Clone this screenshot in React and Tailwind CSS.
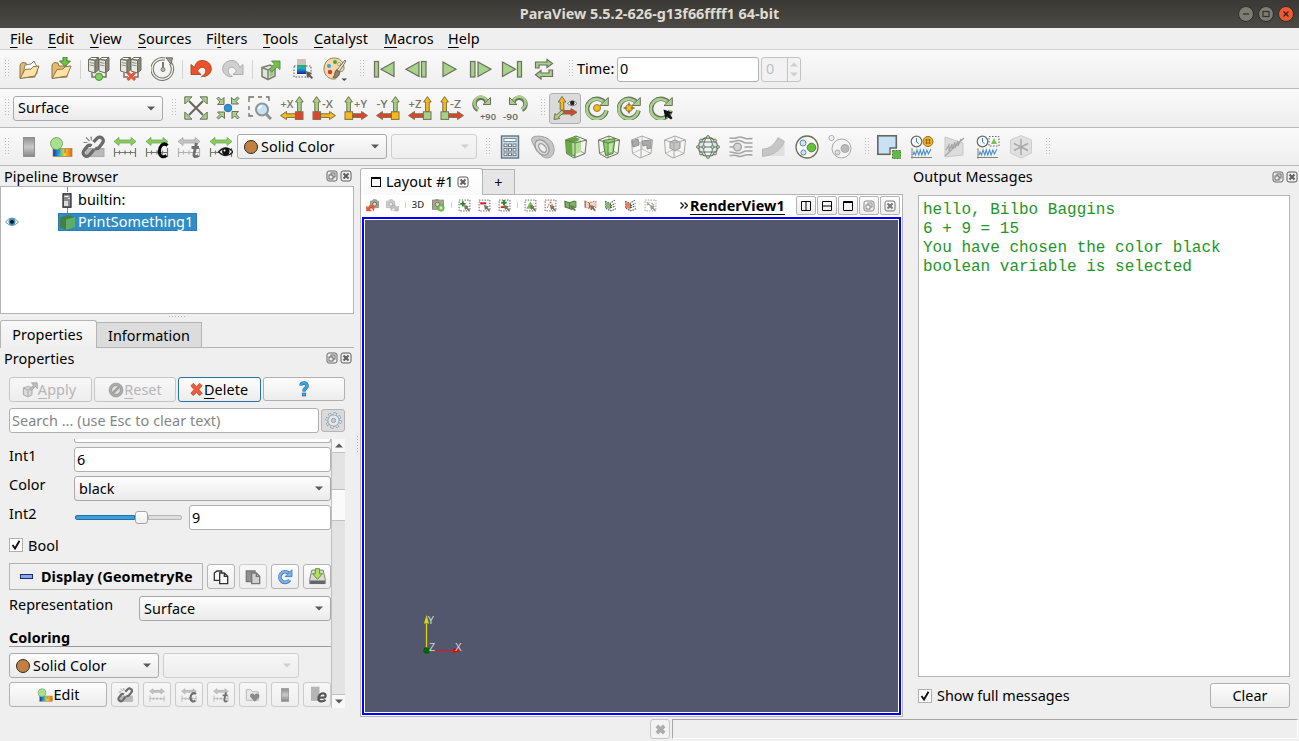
import React from "react";

const G = "#a5d28c";
const S = "#6f6f5c";
const Y = "#fdb813";
const R = "#e2412b";

/* ---------- helpers ---------- */
function Svg({ s = 24, children, className = "" }) {
  return (
    <svg width={s} height={s} viewBox="0 0 24 24" fill="none" className={"shrink-0 " + className}>
      {children}
    </svg>
  );
}
function Slot({ children, wide }) {
  return <div className={(wide ? "w-[33px]" : "w-8") + " flex shrink-0 items-center justify-center"}>{children}</div>;
}
function Dots() {
  return (
    <svg width="5" height="18" viewBox="0 0 5 18" className="shrink-0">
      {[0, 3, 6, 9, 12, 15].map((y) => (
        <g key={y} fill="#bcbcbc">
          <rect x="0" y={y} width="1" height="1" />
          <rect x="3" y={y} width="1" height="1" />
        </g>
      ))}
    </svg>
  );
}
function Grip({ first, filter }) {
  return (
    <div className={"flex shrink-0 items-center " + (first ? "w-[13px] pl-[5px]" : filter ? "w-[16px] pl-[9px]" : "w-[17px] pl-[9px]")}>
      <Dots />
    </div>
  );
}
function Sep() {
  return (
    <div className="flex w-[6px] shrink-0 justify-center">
      <div className="h-[19px] w-px bg-[#d2d2d2]" />
    </div>
  );
}
function Caret({ dim, up }) {
  return (
    <svg width="8" height="5" viewBox="0 0 8 5" className="shrink-0">
      <path d={up ? "M0 4.5L4 .5L8 4.5z" : "M0 .5L4 4.5L8 .5z"} fill={dim ? "#cfcfcf" : "#5a5a5a"} />
    </svg>
  );
}
const BTN = "border border-[#b0b0b0] rounded-[3px] bg-linear-to-b from-[#fdfdfd] to-[#ececec] ";
function Combo({ className, dim, children }) {
  return (
    <div
      className={
        "flex h-[25px] shrink-0 items-center justify-between rounded-[3px] border bg-linear-to-b pr-[7px] pl-[5px] " +
        (dim ? "border-[#cecece] from-[#f6f6f6] to-[#eeeeee] " : "border-[#a9a9a9] from-[#fdfdfd] to-[#ebebeb] ") +
        className
      }
    >
      <div className="flex items-center">{children}</div>
      <Caret dim={dim} />
    </div>
  );
}
function Ball() {
  return <div className="mr-[3px] ml-[1px] h-[14px] w-[14px] rounded-full border border-[#2b2b2b] bg-[#c47f43]" />;
}
function DockButtons() {
  return (
    <div className="flex gap-[2px]">
      <svg width="12" height="12" viewBox="0 0 12 12" fill="none" stroke="#666" strokeWidth="1">
        <rect x="1" y="1" width="10" height="10" rx="2" />
        <rect x="5" y="3" width="4" height="4" />
        <rect x="3" y="5" width="4" height="4" fill="#eee" />
      </svg>
      <CloseBox />
    </div>
  );
}
function CloseBox({ c = "#5c5c5c" }) {
  return (
    <svg width="12" height="12" viewBox="0 0 12 12" fill="none" stroke={c}>
      <rect x="1" y="1" width="10" height="10" rx="2" />
      <path d="M3.500 3.500l5 5M8.500 3.500l-5 5" strokeWidth="2" />
    </svg>
  );
}

/* ---------- icons: file toolbar ---------- */
function Folder({ save }) {
  return (
    <Svg>
      <path d="M3 21L3 8L5 5.500L9 6L10 9L18 9L18 20z" fill="#e5bb6a" stroke="#8b744a" />
      {!save && <path d="M6 17L8 8L14 7L17 4L20 10L20 17z" fill="#fff" stroke="#84847c" />}
      <path d="M3 21.500L8 12.500L14 12L16 9.800L22 9L18 19z" fill="#ffe2a5" stroke="#8b744a" />
      {save && <path d="M14 0h4v4h3.500L16 9.500L10.500 4H14z" fill="#6fc043" stroke="#4f7d3a" />}
    </Svg>
  );
}
function Server({ bad }) {
  return (
    <Svg>
      {[1.5, 12].map((x) => (
        <g key={x} stroke="#6c6c60">
          <path d={`M${x} 2.500l3-2h7l-3 2.500z`} fill="#fff" />
          <path d={`M${x} 2.500l6.500 1v12.500l-6.500-2z`} fill="#e9e9e4" />
          <path d={`M${x + 6.5} 3.500l3.500-3v12.500l-3.500 3z`} fill="#85857a" />
          <path d={`M${x + 1} 5.500l4.500 .8M${x + 1} 8l4.500 .8`} stroke="#8b8b80" strokeWidth="1" />
        </g>
      ))}
      <path d="M5 15.500v4.500h4M19 15.500v4.500h-4" stroke="#74746a" strokeWidth="1.500" />
      {bad ? (
        <path d="M8.500 15.500l7.500 7.500M16 15.500l-7.500 7.500" stroke="#e4563d" strokeWidth="3" />
      ) : (
        <circle cx="12" cy="19.800" r="3.700" fill="#7fd05a" stroke="#5d8a49" />
      )}
    </Svg>
  );
}
function Timer() {
  return (
    <Svg>
      <path d="M19.500 6A10.200 10.200 0 1 1 14 2.200" stroke="#6f6f66" strokeWidth="3.400" />
      <path d="M19.500 6A10.200 10.200 0 1 1 14 2.200" stroke="#f1f1ec" strokeWidth="1.400" />
      <path d="M15 .8h6.500l-1.500 6.500z" fill="#9b9b92" stroke="#6f6f66" />
      <path d="M12 5v7" stroke="#77776c" strokeWidth="2" />
      <circle cx="12" cy="12.500" r="2" fill="#bbb" stroke="#77776c" />
    </Svg>
  );
}
function Undo({ gray, flip }) {
  return (
    <Svg className={flip ? "-scale-x-100" : ""}>
      <path
        d="M2 7.500L2 17.500L12 17.500L8.500 14C10.500 9.500 15.500 9 16.500 12.500C17.300 15.500 15.500 18 12.500 19.500C18.500 20 22.300 16.500 22.300 11.500C22 6.500 18 3.500 13 3.500C9 3.500 6.500 6 5.500 10.500z"
        fill={gray ? "#cfcfcf" : "#ee5127"}
        stroke={gray ? "#a6a6a6" : "#a34429"}
        strokeWidth=".9"
      />
    </Svg>
  );
}
function Cube3() {
  return (
    <Svg>
      <path d="M3 10.500l8-2.500 5 2.500v8.500l-7 3.500-6-3z" fill="#dfe6d9" stroke="#7c8074" strokeWidth="1.600" />
      <path d="M3 10.500l6 2.500 7-2.500M9 13V22" stroke="#7c8074" strokeWidth="1.500" />
      <path d="M10.500 14l4-1.500v5.500l-4 2z" fill="#9fbf8c" />
      <path d="M12.500 4h8.500v8.500l-2.800-2.500-5.400 5-2.600-2.600L15.500 7z" fill="#76bf4d" stroke="#5f9142" />
    </Svg>
  );
}
function LegendIcon() {
  return (
    <Svg>
      <path d="M3 9h17v11H3z" stroke="#555" strokeDasharray="1.500 1.500" />
      <defs>
        <linearGradient id="lg" x1="0" y1="0" x2="0" y2="1">
          <stop offset="0" stopColor="#2ea84e" />
          <stop offset=".35" stopColor="#17b4d0" />
          <stop offset="1" stopColor="#1c1f9c" />
        </linearGradient>
      </defs>
      <rect x="6" y="2" width="9" height="7" fill="#cbc3bb" />
      <rect x="6" y="8" width="9" height="9" fill="url(#lg)" />
      <path d="M15 14l6 2-2 1.500 3 3.200-1.200 1.200-3.300-2.700-1.500 2z" fill="#5c5c50" />
    </Svg>
  );
}
function Palette() {
  return (
    <Svg>
      <path d="M11 1C5 1 1 6 1 12s5 11 11 10c3-1 0-4 2-6s7 0 7-5C21 5 17 1 11 1z" fill="#f6d9a8" stroke="#9a8052" />
      <circle cx="6" cy="9" r="2" fill="#3ba6df" />
      <circle cx="12" cy="5" r="2" fill="#4ba53f" />
      <circle cx="7" cy="15" r="2.200" fill="#d73a2c" />
      <circle cx="16" cy="7" r="1.500" fill="#fff" stroke="#b49a68" />
      <path d="M22 3l-8 10 2 2 7-11z" fill="#eee" stroke="#77715e" />
      <path d="M14 12.500c-3 2-1 5-4 8 4 1 7-2 6.500-5.500z" fill="#8a8676" stroke="#5e5a4c" />
      <path d="M18.500 21.500h5.500L21.200 24z" fill="#444" />
    </Svg>
  );
}
function VcrIcon({ kind }) {
  const p = { fill: G, stroke: S, strokeWidth: 1.2 };
  return (
    <Svg>
      {kind === "first" && (<g {...p}><rect x="2.500" y="4.500" width="4" height="15.500" /><path d="M22 5v14.500L9 12.200z" /></g>)}
      {kind === "prev" && (<g {...p}><rect x="17.500" y="4.500" width="4.500" height="15.500" /><path d="M15 5v14.500L2 12.200z" /></g>)}
      {kind === "play" && <path {...p} d="M7 5v14.500l13-7.300z" />}
      {kind === "next" && (<g {...p}><rect x="2.500" y="4.500" width="4.500" height="15.500" /><path d="M10 5v14.500l13-7.300z" /></g>)}
      {kind === "last" && (<g {...p}><rect x="17.500" y="4.500" width="4" height="15.500" /><path d="M2.500 5v14.500l13-7.300z" /></g>)}
      {kind === "loop" && (
        <g {...p}>
          <path d="M3.500 11V5H15V2.500L20.500 6.500L15 10.500V8H7V11z" />
          <path d="M20.500 13V19.500H9V22L3.500 17.800L9 13.500V16H17V13z" />
        </g>
      )}
    </Svg>
  );
}

/* ---------- icons: camera toolbar ---------- */
function ResetCam({ kind }) {
  return (
    <Svg>
      {kind === "out" && <path d="M5 5l14 14M19 5L5 19" stroke="#66665a" strokeWidth="2" />}
      {[0, 90, 180, 270].map((a) => (
        <path
          key={a}
          d={kind === "out" ? "M0.800 .8H8L.8 8z" : "M1 2.500L2.500 1L5.500 4L8 1.500V8.500H1.500L4 6z"}
          fill={G}
          stroke={S}
          strokeWidth="1"
          transform={`rotate(${a} 12 12)`}
        />
      ))}
      {kind === "in" && <circle cx="12" cy="12" r="3.800" fill="#2196d8" stroke="#42729a" />}
    </Svg>
  );
}
function ZoomBox() {
  return (
    <Svg>
      <path d="M1 6V1H6M10 1h4M18 1h3v4M1 10v4M1 17v3h4" stroke="#6f6f66" strokeWidth="1.300" />
      <circle cx="14" cy="13.500" r="6" fill="#c5e3f6" stroke="#8f9496" strokeWidth="2" />
      <path d="M18.500 18.500l4.500 4.500" stroke="#8f9090" strokeWidth="3" />
      <path d="M10.500 13a4 4 0 0 1 3.500-3" stroke="#fff" strokeWidth="1.500" />
    </Svg>
  );
}
function AxisIcon({ label, left, box, up, hor }) {
  const flip = left ? "translate(24,0) scale(-1,1)" : undefined;
  return (
    <Svg className="overflow-visible">
      <g transform={flip} stroke="#77704e" strokeWidth="1">
        <path d="M2.800 15.500V6H.8L4.600 .6L8.400 6H6.400V15.500z" fill={up} />
        <path d="M8.500 17.800H17.500V15.500L23.500 19.600L17.500 23.500V21.400H8.500z" fill={hor} />
        <rect x="1" y="15.800" width="7.600" height="7.600" fill={box} />
      </g>
      <text x={left ? 0.5 : 10} y="11.500" fontSize="10.500" fontFamily="Open Sans, sans-serif" fontWeight="600" fill="#77776c" textLength={label[0] === "-" ? 11 : 13} lengthAdjust="spacingAndGlyphs">
        {label}
      </text>
    </Svg>
  );
}
function Rot90({ ccw }) {
  return (
    <Svg className="overflow-visible">
      <g transform={ccw ? "translate(24,0) scale(-1,1)" : undefined}>
        <path d="M6 13.800A6.300 6.300 0 1 1 15 7" stroke={S} strokeWidth="4.400" />
        <path d="M6.500 13A6.300 6.300 0 1 1 15 7" stroke={G} strokeWidth="2.500" />
        <path d="M11 8.500H18.500V1.500z" fill={G} stroke={S} />
      </g>
      <text x={ccw ? -1 : 8} y="24" fontSize="9.500" fontFamily="Open Sans, sans-serif" fontWeight="600" fill="#66665c" textLength={ccw ? 15 : 16} lengthAdjust="spacingAndGlyphs">
        {ccw ? "-90" : "+90"}
      </text>
    </Svg>
  );
}
function AxesEye() {
  return (
    <Svg className="-ml-[3px] overflow-visible">
      <g stroke="#77704e">
        <path d="M8.200 14V6H6.200L10 .5L13.800 6H11.800V14z" fill={Y} />
        <path d="M10 14.500H19V12.500L25 16.300L19 20V18H10z" fill={R} />
        <path d="M10 14l2 2.500-5.500 4.500 1.300 1.500L2 23.500L3 17.500l1.500 1.500z" fill={G} />
      </g>
      <path d="M15.500 7.500q5-5.500 9.500 0q-4.500 4.500-9.500 0z" fill="#fff" stroke="#777" />
      <circle cx="20.300" cy="7" r="2.300" fill="#222" />
    </Svg>
  );
}
function CenterRot({ kind }) {
  return (
    <Svg>
      <path d="M20.800 8.500A9.800 9.800 0 1 0 21.500 14.500" stroke={S} strokeWidth="4.600" />
      <path d="M20.300 8.500A9.800 9.800 0 1 0 21.300 14.200" stroke={G} strokeWidth="2.700" />
      <path d="M15 9.500L23.300 9.500V1.500z" fill={G} stroke={S} />
      {kind !== "pick" && <circle cx="12" cy="12" r="3.500" fill={Y} stroke="#8e7d45" />}
      {kind === "cross" && <path d="M12 6.500v11M6.500 12h11" stroke={S} strokeWidth="1.300" />}
      {kind === "cross" && <circle cx="12" cy="12" r="2.400" fill={Y} />}
      {kind === "pick" && <path d="M14.500 13.500l9 3-3 1.500 3 4-1.500 1.500-4-3-1.500 3z" fill="#111" />}
    </Svg>
  );
}

/* ---------- icons: color toolbar ---------- */
function GrayBar({ s }) {
  return (
    <Svg s={s}>
      <defs>
        <linearGradient id="gb" x1="0" y1="0" x2="0" y2="1">
          <stop offset="0" stopColor="#8e8e8e" />
          <stop offset=".5" stopColor="#c9c9c9" />
          <stop offset="1" stopColor="#858585" />
        </linearGradient>
      </defs>
      <rect x="6.500" y="2.500" width="11" height="19" fill="url(#gb)" stroke="#909090" />
    </Svg>
  );
}
function ColorMap({ s }) {
  return (
    <Svg s={s}>
      <defs>
        <linearGradient id="rb">
          <stop offset="0" stopColor="#1a2a9c" />
          <stop offset=".3" stopColor="#17aeda" />
          <stop offset=".6" stopColor="#f3cf2c" />
          <stop offset="1" stopColor="#ee5a1e" />
        </linearGradient>
      </defs>
      <rect x="4" y="13.500" width="19" height="8" fill="url(#rb)" stroke="#a28e52" strokeWidth=".8" />
      <circle cx="7.500" cy="8.500" r="6" fill="#a8e08c" stroke="#7bab68" />
      <path d="M10 18v-4M16 18v-4" stroke="#666" strokeWidth=".8" />
    </Svg>
  );
}
function Rescale({ kind, gray, s }) {
  const a = gray ? "#c4c4c4" : "#84cf5a";
  return (
    <Svg s={s}>
      {kind !== "link" && (
        <>
          <path d="M1 6.500L6 2.500V5H18V2.500L23 6.500L18 10.500V8H6V10.500z" fill={a} stroke={gray ? "#a5a5a5" : "#75a55c"} strokeWidth=".8" />
          <path d="M1.500 13v9M22.500 13v9M1 17.500h22M6.500 15.500v4M12 15.500v4M17.500 15.500v4" stroke={gray ? "#b2b2b2" : "#77776a"} strokeWidth="1.200" />
        </>
      )}
      {kind === "link" && (
        <>
          <rect x="5" y="13.500" width="18" height="8" fill="#b9b9b9" stroke="#aaa" />
          <path d="M13 14.500l-4.500 5.500a3.300 3.300 0 0 1-5.500-4.500l3.500-4.500a3.200 3.200 0 0 1 4 0M12.500 7l3.500-3.500a3.300 3.300 0 0 1 5.500 4.500l-3.500 4.500a3.200 3.200 0 0 1-4 .5" stroke="#6a6a6a" strokeWidth="3.300" />
          <path d="M5 2.500l3.500 3.500M10 1.500l.5 4M2.500 7.500h4" stroke="#888" strokeWidth="1.200" />
        </>
      )}
      {kind === "c" && <path d="M22.500 10.500C18 6.500 13.500 12 14.500 18c.5 3.500 3.500 5 7 2.500" stroke={gray ? "#6d6d6d" : "#0a0a0a"} strokeWidth="3.200" />}
      {kind === "t" && <path d="M19.500 8L17 19c-.5 3 1.500 3.500 4.500 1.500M14.500 12.500h7.500" stroke="#707070" strokeWidth="2.800" />}
      {kind === "eye" && (
        <>
          <path d="M9.500 17q7.500-8 14.500 0q-7 7-14.500 0z" fill="#f0f0f0" stroke="#222" strokeWidth="1.300" />
          <circle cx="16.800" cy="16.500" r="3.700" fill="#111" />
          <circle cx="15.500" cy="15.500" r="1" fill="#fff" />
        </>
      )}
    </Svg>
  );
}

/* ---------- icons: filters toolbar ---------- */
function Calc() {
  return (
    <Svg>
      <rect x="3.500" y="1" width="17" height="22" fill="#c3def2" stroke="#64757f" strokeWidth="1.400" />
      <rect x="6" y="3.500" width="12" height="3" fill="#fff" stroke="#7c8c95" />
      {[9, 13.5, 18].map((y) => [6, 10.5, 15].map((x) => <rect key={x + "-" + y} x={x} y={y} width="3" height="2.600" fill="#fff" stroke="#6a7176" strokeWidth=".9" />))}
    </Svg>
  );
}
function Contour() {
  return (
    <Svg>
      <path d="M1 3C3 0 16 0 21 7.500c3.500 6 2.500 12-1.500 14.500c-4 2-8 .5-11-3.500S-1 6.500 1 3z" fill="#c6c6c6" stroke="#a0a0a0" />
      <ellipse cx="11" cy="12.500" rx="6" ry="8.500" transform="rotate(-38 11 12.500)" fill="#dcdcdc" stroke="#9a9a9a" strokeWidth="1.300" />
      <ellipse cx="11.500" cy="13" rx="3" ry="5" transform="rotate(-38 11.500 13)" fill="#eee" stroke="#9a9a9a" strokeWidth="1.300" />
    </Svg>
  );
}
function CubeIcon({ kind }) {
  const gray = kind === "thresh" || kind === "subset";
  const c = gray ? "#a9a9a9" : "#68755c";
  return (
    <Svg>
      <path d="M1.500 5L12 1l10.500 4-1.500 13.500L10 23L2.500 18.500z" fill="#f5f5f3" stroke={c} />
      <path d="M3 18l9-4 9 4.500M12 1v13" stroke={c} strokeWidth=".7" />
      {kind === "clip" && <><path d="M1.500 5L11 2l5 2-5 4v14L3 18.500z" fill="#5fa53a" /><path d="M8 8l9-3v12L8.500 20z" fill="#b3df96" /><path d="M2 5.500L8 8v13L3 18.500z" fill="#68a945" /></>}
      {kind === "slice" && <><path d="M6 5.500L18 3.500 16 18.500 8.500 20.500z" fill="#8dce6b" stroke="#4d803a" /><path d="M10 9l6-1-1 9h-4z" fill="#b9e49d" /></>}
      {kind === "thresh" && <><path d="M2 6l6-2 1 6-6 2zM12 6l9-1v8l-4 1v-4l-4 1z" fill="#aaa" stroke="#8f8f8f" /></>}
      {kind === "subset" && <><path d="M7 7l5-2 5 2v6l-5 3-5-3z" fill="#c4c4c4" stroke="#999" /></>}
      <path d="M1.500 5L11 8l11.500-3M11 8v14.500" stroke={c} />
    </Svg>
  );
}
function Glyph() {
  return (
    <Svg>
      <circle cx="12" cy="12" r="9.500" fill="#cfe7f6" stroke={S} strokeWidth="1.300" />
      <ellipse cx="12" cy="12" rx="4.500" ry="9.500" fill="#e7f4fb" stroke={S} />
      <path d="M2.500 12h19M4.500 7h15M4.500 17h15" stroke={S} />
      {[[12, 2], [12, 22], [2, 12], [22, 12], [7.5, 12], [16.5, 12], [5, 5.5], [19, 5.5], [5, 18.5], [19, 18.5]].map(([x, y]) => (
        <circle key={x + "." + y} cx={x} cy={y} r="1.500" fill="#b4d99b" stroke={S} strokeWidth=".8" />
      ))}
    </Svg>
  );
}
function Stream() {
  return (
    <Svg>
      <path d="M.5 3c5 0 5 1 8-.5s6 .5 8 1 5 0 7 0M.5 7c4 0 6-1.500 9-1.500s5 2.500 8 2.500h6M.5 20.500c5 0 5-1 8 .5s6-.5 8-1 5 0 7 0M.5 17c4 0 6 1.500 9 1.500s5-2.500 8-2.500h6M.5 12h4M15.500 12h8" stroke="#a5a5a5" strokeWidth="1.600" />
      <circle cx="8.500" cy="12" r="3.800" fill="#d5d5d5" stroke="#a0a0a0" strokeWidth="1.300" />
    </Svg>
  );
}
function Warp() {
  return (
    <Svg>
      <path d="M.5 14C8 14 13 9 16 3l6 3.500c1 2 .5 5 .5 6V21H.5z" fill="#e0e0e0" />
      <path d="M.5 14C8 14 13 9 16 2.500L22.500 6.500C20 13 13 20.500 .5 21.500z" fill="#c6c6c6" stroke="#aeaeae" strokeWidth=".7" />
    </Svg>
  );
}
function Group({ extract }) {
  return (
    <Svg>
      {extract ? (
        <g stroke="#a8a8a8">
          <circle cx="13.500" cy="13.500" r="9.500" fill="#f4f4f4" />
          <circle cx="3.500" cy="3" r="2.600" fill="#f4f4f4" />
          <circle cx="17" cy="13.500" r="4" fill="#bbb" />
          <circle cx="9.500" cy="17.500" r="2.500" fill="#ddd" />
        </g>
      ) : (
        <g stroke={S}>
          <circle cx="12" cy="12" r="11" fill="#f8f8f6" strokeWidth="1.300" />
          <circle cx="8" cy="8" r="3" fill="#cfe5f4" stroke="#5c88a4" />
          <circle cx="16.500" cy="12.500" r="4.300" fill="#67bf3e" stroke="#4f8637" />
          <circle cx="8.500" cy="17.500" r="2.500" fill="#cfe5f4" stroke="#5c88a4" />
        </g>
      )}
    </Svg>
  );
}
const WAVE = "M3 20l1-3 1.500 3L7 15l1.800 5 1.500-5 1.500 5 1.800-5 1.500 5 1.800-5 1.500 4L21 14";
function Plot({ kind }) {
  if (kind === "box")
    return (
      <Svg>
        <rect x=".8" y=".8" width="18.500" height="18.500" fill="#c8e1f4" stroke="#66665c" strokeWidth="1.600" />
        <rect x="13" y="13" width="11" height="11" fill="#f4f4f4" />
        <path d="M13 20V13H20" stroke="#66665c" strokeWidth="1.400" />
        <rect x="15.500" y="15.500" width="8" height="8" fill="#60bb45" stroke="#4c7c3b" strokeDasharray="2 1" />
      </Svg>
    );
  if (kind === "line")
    return (
      <Svg>
        <path d="M2 2l18 6v12L2 22z" fill="#dcdcdc" stroke="#c6c6c6" />
        <path d="M2 21L21 3M3 15l3-5v6l3-7v5l3-7v6l3-7v5l3-7" stroke="#a4a4a4" strokeWidth="1.200" />
      </Svg>
    );
  if (kind === "star")
    return (
      <Svg>
        <path d="M1.500 5L12 .5 22.500 5v13L12 23 1.500 18z" fill="#e0e0e0" stroke="#cccccc" />
        <path d="M12 4v16M5 8.500l14 7M19 8.500l-14 7" stroke="#a5a5a5" strokeWidth="1.400" />
      </Svg>
    );
  return (
    <Svg>
      <circle cx="6.500" cy="6.500" r="5.300" fill="#f6fafc" stroke="#6b6b60" strokeWidth="1.200" />
      <path d="M6.500 3v4l2 1.500" stroke="#3a7fb5" />
      {kind === "point" ? (
        <g><circle cx="18" cy="6.500" r="5" fill="#f3b21e" stroke="#85702f" /><path d="M15.500 5h5M15.500 8h5M16.500 4v5M19.500 4v5" stroke="#7a5b10" strokeWidth=".8" /></g>
      ) : (
        <g><rect x="13" y="1.500" width="10" height="9.500" stroke="#666" strokeDasharray="1.500 1.500" /><path d="M18 3l3 6h-6z" fill="#74c551" /></g>
      )}
      <path d={WAVE} stroke="#4c93cb" strokeWidth="1.100" />
      <path d="M2 13v10.500M1 22.500h21" stroke="#77776c" strokeWidth=".9" />
    </Svg>
  );
}

/* ---------- icons: view toolbar ---------- */
function CamIcon({ kind }) {
  const gray = kind === "redo";
  const x = kind === "undo" ? 8 : 1;
  return (
    <Svg s={13}>
      <path
        d={`M${x} 4h4l1-2.500h6l1 2.500h3v12H${x}z`}
        fill={gray ? "#cfcfcf" : "#a9a998"}
        stroke={gray ? "#b5b5b5" : "#85856f"}
        strokeWidth="1.500"
      />
      <circle cx={x + 8} cy="9.500" r="3.800" fill={gray ? "#e8e8e8" : "#d5d5cc"} stroke={gray ? "#aaa" : "#6a6a5a"} strokeWidth="1.800" />
      {kind === "undo" && <path d="M1 13v9h9l-3-3c2-4 6-3 6 3 4-4 2-10.500-3-10.500-4 0-5 2-6 4.500z" fill="#e6552c" stroke="#c05a3c" />}
      {gray && <path d="M23 13v9h-9l3-3c-2-4-6-3-6 3-4-4-2-10.500 3-10.500 4 0 5 2 6 4.500z" fill="#c0c0c0" stroke="#a8a8a8" />}
      {kind === "link" && <rect x="1" y="2" width="20" height="17" fill="#a3a78f" stroke="#85856f" strokeWidth="1.500" />}
      {kind === "link" && <circle cx="10" cy="10" r="4" fill="#d5d5cc" stroke="#6a6a5a" strokeWidth="1.500" />}
      {kind === "link" && <circle cx="16.500" cy="16.500" r="6" fill="#85cf5f" stroke="#5a9b42" strokeWidth="1.500" />}
      {kind === "link" && <circle cx="16.500" cy="16.500" r="2" fill="#e4f5da" />}
    </Svg>
  );
}
function SelIcon({ kind }) {
  const cube = kind.startsWith("cube");
  const poly = kind.startsWith("poly");
  const red = kind.endsWith("R");
  const dim = kind === "dim";
  return (
    <Svg s={13}>
      {!cube && !poly && <rect x="2" y="2" width="20" height="20" stroke={dim ? "#999" : "#555"} strokeWidth="1.800" strokeDasharray="2.500 2.500" />}
      {kind === "plus" && <path d="M9 4v10M4 9h10" stroke="#2b8a1f" strokeWidth="3.500" />}
      {kind === "minus" && <path d="M4 8h11" stroke="#dc1f1f" strokeWidth="4" />}
      {kind === "pm" && <path d="M5 15h12" stroke="#dc1f1f" strokeWidth="3.500" />}
      {kind === "pm" && <path d="M11 2v10M6 7h10" stroke="#2b8a1f" strokeWidth="3.500" />}
      {kind === "tri" && <path d="M12 4l8 14H4z" fill="#77bd58" />}
      {kind === "triR" && <path d="M12 5l7 13M12 5L5 18" stroke="#f06545" strokeWidth="2" strokeDasharray="3 2" />}
      {cube && <path d="M2 4l8 3 9-3 3 1v10l-8 4L3 15z" fill={red ? "#f3d5cd" : "#7ab860"} stroke={red ? "#ea6a4f" : "#5c8749"} strokeWidth="2" strokeDasharray={red ? "3 2" : undefined} />}
      {cube && <path d="M10 7v10M2 4v12" stroke="#66665a" strokeWidth="1.800" />}
      {poly && <path d="M2 4l9 4 9-6M3 4v13l10 5 9-4M12 9v10M12 13l9-5M12 16l9-3" stroke="#4f5f47" strokeWidth="2" strokeDasharray="3 1.500" />}
      {poly && <path d="M3 6l8 2v11l-8-3z" fill={red ? "#ef7b62" : "#86b870"} />}
      {dim && <path d="M5 6l6 6M5 12l5-6M14 7l5 5" stroke="#8db682" strokeWidth="2" />}
      {!poly && <path d="M11 11l9 2.500-2.500 2 4.500 5-2 2-5-4.500-2 3z" fill={dim ? "#999" : "#74745f"} />}
    </Svg>
  );
}

/* ---------- icons: property buttons ---------- */
function SmallIcon({ kind }) {
  const s = 16;
  if (kind === "copy" || kind === "paste") {
    const c = kind === "copy" ? "#333" : "#777";
    const f = kind === "copy" ? "#fafafa" : "#d0d0d0";
    return (
      <Svg s={s}>
        <path d={kind === "copy" ? "M2 6l4-3h7v14H2z" : "M2 3h13v16H2z"} fill={kind === "copy" ? f : "#909090"} stroke={c} strokeWidth="2" />
        <path d="M10 6h7l5 5v11H10z" fill={f} stroke={c} strokeWidth="2" />
        <path d="M17 6v5h5" stroke={c} strokeWidth="2" />
      </Svg>
    );
  }
  if (kind === "reload")
    return (
      <Svg s={s}>
        <path d="M19 16.500A8 8 0 1 1 17.500 6" stroke="#3f76b5" strokeWidth="5.500" />
        <path d="M18.500 16.500A8 8 0 1 1 17.500 6" stroke="#78b0e6" strokeWidth="3.500" />
        <path d="M22.500 1v10.500H12z" fill="#78b0e6" stroke="#3f76b5" strokeWidth="1.200" />
      </Svg>
    );
  if (kind === "save")
    return (
      <Svg s={17}>
        <path d="M4 3h16l3 13v6H1v-6z" fill="#d9d9d9" stroke="#777" strokeWidth="1.300" />
        <path d="M1.500 17.500h21v5h-21z" fill="#666" />
        <path d="M9 1h6v7h4l-7 8-7-8h4z" fill="#b4e05f" stroke="#5a8c26" strokeWidth="1.300" />
      </Svg>
    );
  if (kind === "fav")
    return (
      <Svg s={16}>
        <path d="M2 20V4h7l2 3h9v13z" fill="#e8e8e8" stroke="#b9b9b9" strokeWidth="1.500" />
        <path d="M14.500 22l-6.500-7c-2-5 4-7 6.500-3 2-4 8.500-2 7 3z" fill="#8b8b8b" />
      </Svg>
    );
  if (kind === "e")
    return (
      <Svg s={17} className="ml-[5px]">
        <rect x="0" y="1" width="12" height="20" fill="#b5b5b5" />
        <path d="M10 16.500h8c4-1 3-6-1-6s-7 4-6.500 8c.5 4 6 4 10 1" stroke="#555" strokeWidth="3.200" />
      </Svg>
    );
  return null;
}
function PropBtn({ dim, children }) {
  return (
    <div className={"flex h-[25px] w-[28px] shrink-0 items-center justify-center overflow-hidden rounded-[3px] border bg-linear-to-b " + (dim ? "border-[#cbcbcb] from-[#f7f7f7] to-[#eeeeee]" : "border-[#b4b4b4] from-[#fdfdfd] to-[#ececec]")}>
      {children}
    </div>
  );
}
function Check({ label, className }) {
  return (
    <div className="flex items-center gap-[5px]">
      <div className="flex h-[14px] w-[14px] items-center justify-center border border-[#b0b0b0] bg-white">
        <svg width="10" height="10" viewBox="0 0 10 10" fill="none">
          <path d="M1.500 5L4 8.500L8.500 .8" stroke="#111" strokeWidth="1.900" />
        </svg>
      </div>
      <span className={className}>{label}</span>
    </div>
  );
}
const U = "underline decoration-1 underline-offset-[3px]";
const FIELD = "flex items-center rounded-[3px] border border-[#b0b0b0] bg-white pl-[2px] ";

const MENUS = [
  ["", "F", "ile", "w-[38px]"],
  ["", "E", "dit", "w-[42px]"],
  ["", "V", "iew", "w-[48px]"],
  ["", "S", "ources", "w-[68px]"],
  ["Fi", "l", "ters", "w-[57px]"],
  ["", "T", "ools", "w-[51px]"],
  ["", "C", "atalyst", "w-[70px]"],
  ["", "M", "acros", "w-[64px]"],
  ["", "H", "elp", "w-[40px]"],
];

function Toolbar({ children, className = "h-[39px]" }) {
  return <div className={"flex shrink-0 items-center border-b border-[#b9b9b9] bg-linear-to-b from-[#fafafa] to-[#eeeeee] " + className}>{children}</div>;
}

function LeftPanel() {
  return (
    <div className="flex w-[360px] shrink-0 flex-col">
      <div className="flex h-[20px] w-[354px] items-center justify-between pr-[2px] pl-1">
        <span className="mt-[2px]">Pipeline Browser</span>
        <DockButtons />
      </div>
      <div className="flex h-[128px] w-[354px] flex-col border border-[#b4b4b4] bg-white">
        <div className="ml-[66px] h-[5px] w-px bg-[#888]" />
        <div className="flex h-4 items-center pl-[61px]">
          <svg width="10" height="15" viewBox="0 0 10 15" className="shrink-0">
            <rect x="1" y=".8" width="8" height="13.400" fill="#8b8b8b" stroke="#222" strokeWidth="1.200" />
            <path d="M2.500 3.500h4" stroke="#fff" />
            <rect x="2" y="8" width="4" height="5" fill="#ddd" />
            <circle cx="7" cy="5.500" r=".8" fill="#fff" />
          </svg>
          <span className="ml-[6px]">builtin:</span>
        </div>
        <div className="ml-[66px] h-[5px] w-px bg-[#888]" />
        <div className="flex h-[18px] items-center">
          <svg width="14" height="10" viewBox="0 0 14 10" className="ml-[4px] shrink-0">
            <path d="M.5 5q6.500-8 13 0q-6.500 7-13 0z" fill="#fff" stroke="#888" />
            <circle cx="7" cy="4.800" r="3.500" fill="#2e8fcf" />
            <circle cx="7" cy="4.800" r="1.900" fill="#111" />
          </svg>
          <div className="ml-[39px] flex h-[18px] w-[139px] items-center border border-[#2a7cb5] bg-[#308cc6] text-white">
            <svg width="15" height="15" viewBox="0 0 15 15" className="ml-[1px] shrink-0">
              <path d="M0 2.500L8 0l7 2v10l-8 3-7-3z" fill="#3f7e4c" />
              <path d="M6 4.500l9-2.500v10l-9 3z" fill="#5fae68" />
              <path d="M0 2.500l6 2v10L0 12z" fill="#447f4a" />
            </svg>
            <span className="ml-[3px]">PrintSomething1</span>
          </div>
        </div>
      </div>
      <div className="flex h-[6px] w-[354px] items-center justify-center gap-[2px] pb-[2px]">
        {[0, 1, 2, 3, 4, 5].map((i) => <div key={i} className="h-px w-px bg-[#b5b5b5]" />)}
      </div>
      <div className="flex h-[28px] w-[354px] items-end">
        <div className="z-10 flex h-[28px] w-[97px] items-center justify-center rounded-t-[3px] border border-b-0 border-[#b4b4b4] bg-linear-to-b from-[#f8f8f8] to-[#efefef] pr-[2px]">Properties</div>
        <div className="-ml-px flex h-[26px] w-[106px] items-center justify-center border border-[#b4b4b4] bg-[#dcdcdc] pt-px">Information</div>
        <div className="h-px flex-1 bg-[#b4b4b4]" />
      </div>
      <div className="flex h-[29px] w-[354px] items-start justify-between pr-[2px] pl-1">
        <span className="mt-[2px]">Properties</span>
        <div className="mt-[4px]"><DockButtons /></div>
      </div>
      <div className="flex h-[31px] gap-[2px] pl-[9px]">
        <div className="flex h-[25px] w-[83px] items-center justify-center rounded-[3px] border border-[#c6c6c6] bg-linear-to-b from-[#f7f7f7] to-[#eeeeee] pr-[3px] text-[#b6b6b6]">
          <Svg s={16}>
            <path d="M2 9l8-2.500L15 9v10l-6 3.500L2 19z" fill="#d9d9d9" stroke="#a9a9a9" strokeWidth="1.500" />
            <path d="M2 9l7 3 6-3M9 12v10" stroke="#a9a9a9" strokeWidth="1.500" />
            <path d="M14 1h9v9l-3-3-6 6-2-3 5-5z" fill="#bcbcbc" stroke="#a0a0a0" />
          </Svg>
          <span><span className={U}>A</span>pply</span>
        </div>
        <div className="flex h-[25px] w-[82px] items-center justify-center rounded-[3px] border border-[#c6c6c6] bg-linear-to-b from-[#f7f7f7] to-[#eeeeee] text-[#b6b6b6]">
          <Svg s={16}>
            <circle cx="12" cy="12" r="10.500" fill="#aaa" stroke="#999" />
            <circle cx="12" cy="12" r="6.500" fill="#e0e0e0" stroke="#909090" />
            <path d="M7 17L17 7" stroke="#a0a0a0" strokeWidth="4" />
          </Svg>
          <span><span className={U}>R</span>eset</span>
        </div>
        <div className="flex h-[25px] w-[83px] items-center justify-center rounded-[3px] border border-[#2a70a0] bg-linear-to-b from-[#fdfdfd] to-[#ececec] pr-[2px]">
          <Svg s={15}>
            <path d="M3 6l4-4 5 5.500L17 2l4 4-5 6 5 6-4 4-5-5.500L7 22l-4-4 5-6z" fill="#f05a38" stroke="#b34a35" strokeWidth="1.200" />
          </Svg>
          <span><span className={U}>D</span>elete</span>
        </div>
        <div className={BTN + "flex h-[24px] w-[82px] items-center justify-center"}>
          <svg width="12" height="16" viewBox="0 0 12 16" fill="none">
            <path d="M3 4.500C3 1 9.500 1 9 5C8.700 7.500 6 7 6 10.500" stroke="#2474ae" strokeWidth="3.600" />
            <path d="M3 4.500C3 1 9.500 1 9 5C8.700 7.500 6 7 6 10.300" stroke="#38a5e8" strokeWidth="2.200" />
            <rect x="4.300" y="12" width="3.400" height="3" fill="#38a5e8" stroke="#2474ae" strokeWidth=".7" />
          </svg>
        </div>
      </div>
      <div className="flex h-[31px] gap-[2px] pl-[9px]">
        <div className={FIELD + "h-[25px] w-[310px] text-[#858585]"}>Search ... (use Esc to clear text)</div>
        <div className="mt-px flex h-[23px] w-[24px] items-center justify-center rounded-[3px] border border-[#b4b4b4] bg-[#dadada]">
          <Svg s={17}>
            <circle cx="12" cy="12" r="9.500" stroke="#8292a0" strokeWidth="4" strokeDasharray="4 3.460" />
            <circle cx="12" cy="12" r="8" fill="#e3eaee" stroke="#8292a0" strokeWidth="1.300" />
            <circle cx="12" cy="12" r="9.500" stroke="#e3eaee" strokeWidth="2.400" strokeDasharray="2.600 4.860" strokeDashoffset="-.7" />
            <circle cx="12" cy="12" r="3" fill="#cfcfcf" stroke="#8797a5" strokeWidth="1.300" />
          </Svg>
        </div>
      </div>
      <div className="flex h-[269px] w-[345px]">
        <div className="flex h-[269px] w-[331px] flex-col overflow-hidden pl-[9px]">
          <div className="ml-[65px] h-[4px] w-[257px] shrink-0 rounded-b-[3px] border border-t-0 border-[#b0b0b0] bg-white" />
          <div className="mt-[4px] flex h-[29px] shrink-0">
            <span className="w-[65px] leading-[18px]">Int1</span>
            <div className={FIELD + "h-[25px] w-[257px]"}>6</div>
          </div>
          <div className="flex h-[29px] shrink-0">
            <span className="w-[65px] leading-[18px]">Color</span>
            <Combo className="w-[257px]"><span className="-ml-px">black</span></Combo>
          </div>
          <div className="flex h-[34px] shrink-0">
            <span className="w-[65px] leading-[18px]">Int2</span>
            <div className="flex h-[25px] w-[115px] items-center">
              <div className="ml-px h-[5px] w-[60px] rounded-l-[2px] border border-[#2472a5] bg-[#3da0dc]" />
              <div className="h-[13px] w-[13px] rounded-[3px] border border-[#a5a5a5] bg-linear-to-b from-white to-[#eee]" />
              <div className="h-[5px] w-[34px] rounded-r-[2px] border border-[#b5b5b5] bg-[#dddddd]" />
            </div>
            <div className={FIELD + "h-[25px] w-[142px]"}>9</div>
          </div>
          <div className="-mt-px flex h-[25px] shrink-0 items-start"><Check label="Bool" className="-mt-[2px] -mb-1" /></div>
          <div className="flex h-[33px] shrink-0 gap-[4px]">
            <div className="flex h-[27px] w-[194px] items-center border border-[#b4b4b4] bg-[#efefef] pl-[10px]">
              <div className="h-[5px] w-[13px] border border-[#1d2c78] bg-[#8ea5e8]" />
              <span className="ml-[8px] font-bold">Display (GeometryRe</span>
            </div>
            <div className="mt-px flex gap-[4px]">
              <PropBtn><SmallIcon kind="copy" /></PropBtn>
              <PropBtn dim><SmallIcon kind="paste" /></PropBtn>
              <PropBtn><SmallIcon kind="reload" /></PropBtn>
              <PropBtn><SmallIcon kind="save" /></PropBtn>
            </div>
          </div>
          <div className="flex h-[33px] shrink-0">
            <span className="w-[130px] leading-[18px]">Representation</span>
            <Combo className="w-[192px]"><span className="-ml-px">Surface</span></Combo>
          </div>
          <div className="flex h-[18px] w-[322px] shrink-0 items-center border-b border-[#999] font-bold">Coloring</div>
          <div className="mt-[6px] flex h-[29px] shrink-0 gap-[4px]">
            <Combo className="w-[150px]"><Ball /><span>Solid Color</span></Combo>
            <Combo className="w-[136px]" dim />
          </div>
          <div className="flex shrink-0 gap-[4px]">
            <div className={BTN + "flex h-[25px] w-[98px] items-center justify-center"}><ColorMap s={16} /><span className="ml-px">Edit</span></div>
            <PropBtn dim><Rescale kind="link" s={16} /></PropBtn>
            <PropBtn dim><Rescale gray s={16} /></PropBtn>
            <PropBtn dim><Rescale gray kind="c" s={16} /></PropBtn>
            <PropBtn dim><Rescale gray kind="t" s={16} /></PropBtn>
            <PropBtn dim><SmallIcon kind="fav" /></PropBtn>
            <PropBtn dim><GrayBar s={16} /></PropBtn>
            <PropBtn dim><SmallIcon kind="e" /></PropBtn>
          </div>
        </div>
        <div className="flex w-[14px] flex-col border-l border-[#c0c0c0] bg-[#e3e3e3]">
          <div className="flex h-[14px] items-center justify-center border-b border-[#c0c0c0] bg-[#f8f8f8]"><Caret up /></div>
          <div className="mt-[36px] h-[32px] border-y border-[#c0c0c0] bg-[#fafafa]" />
          <div className="flex-1" />
          <div className="flex h-[14px] items-center justify-center border-t border-[#c0c0c0] bg-[#f8f8f8]"><Caret /></div>
        </div>
        <div className="-mr-[15px] ml-[12px] flex w-[3px] shrink-0 flex-col gap-[2px]">
          {[0, 1, 2, 3, 4, 5].map((i) => <div key={i} className="h-px w-px shrink-0 bg-[#b5b5b5] first:-mt-[3px]" />)}
        </div>
      </div>
    </div>
  );
}

function ViewBtn({ children }) {
  return <div className="flex h-[19px] w-[20px] shrink-0 items-center justify-center rounded-[2px] border border-[#b4b4b4] bg-linear-to-b from-[#fdfdfd] to-[#eeeeee]">{children}</div>;
}
function S20({ children }) {
  return <div className="flex w-5 shrink-0 items-center justify-center">{children}</div>;
}
function MiniSep() {
  return <div className="flex w-[6px] shrink-0 justify-center"><div className="h-[6px] w-px bg-[#cfcfcf]" /></div>;
}

function CenterPanel() {
  return (
    <div className="flex w-[543px] shrink-0 flex-col">
      <div className="flex h-[29px] items-end">
        <div className="z-10 flex h-[27px] w-[123px] shrink-0 items-center rounded-t-[3px] border border-b-0 border-[#b4b4b4] bg-linear-to-b from-white to-[#fafafa] pl-[10px]">
          <div className="h-[10px] w-[10px] border border-t-2 border-black" />
          <span className="ml-[5px] w-[68px]">Layout #1</span>
          <div className="ml-[3px]"><CloseBox /></div>
        </div>
        <div className="-ml-px flex h-[26px] w-[33px] items-center justify-center border border-[#b4b4b4] bg-[#e6e6e6] pt-px">+</div>
        <div className="h-px flex-1 bg-[#b4b4b4]" />
      </div>
      <div className="flex h-[522px] flex-col border-r border-b border-l border-[#b4b4b4] bg-white pr-px pl-[1px]">
        <div className="flex h-[22px] shrink-0 items-center pb-[2px]">
          <S20><CamIcon kind="undo" /></S20>
          <S20><CamIcon kind="redo" /></S20>
          <MiniSep />
          <S20><span className="text-[9.5px] font-medium text-[#333]">3D</span></S20>
          <S20><CamIcon kind="link" /></S20>
          <MiniSep />
          <S20><SelIcon kind="plus" /></S20>
          <S20><SelIcon kind="minus" /></S20>
          <S20><SelIcon kind="pm" /></S20>
          <MiniSep />
          <S20><SelIcon kind="tri" /></S20>
          <S20><SelIcon kind="triR" /></S20>
          <S20><SelIcon kind="cubeG" /></S20>
          <S20><SelIcon kind="cubeR" /></S20>
          <S20><SelIcon kind="polyG" /></S20>
          <S20><SelIcon kind="polyR" /></S20>
          <S20><SelIcon kind="dim" /></S20>
          <svg width="8" height="7" viewBox="0 0 8 7" fill="none" stroke="#111" strokeWidth="1.300" className="ml-[20px] shrink-0"><path d="M.5 .5l3 3-3 3M4.500 .5l3 3-3 3" /></svg>
          <span className="ml-[2px] flex w-[107px] shrink-0 font-bold"><span className="mt-[2px] border-b border-black leading-[16px]">RenderView1</span></span>
          <div className="mt-px -ml-px flex gap-[1px]">
            <ViewBtn><svg width="10" height="10" viewBox="0 0 10 10" fill="none" stroke="#000"><path d="M.5 .5h9v9h-9zM5 .5v9" /></svg></ViewBtn>
            <ViewBtn><svg width="10" height="10" viewBox="0 0 10 10" fill="none" stroke="#000"><path d="M.5 .5h9v9h-9zM.5 5h9" /></svg></ViewBtn>
            <ViewBtn><svg width="10" height="10" viewBox="0 0 10 10" fill="none" stroke="#000"><path d="M.5 .5h9v9h-9zM.5 1.500h9" /></svg></ViewBtn>
            <ViewBtn>
              <svg width="12" height="12" viewBox="0 0 12 12" fill="none" stroke="#888"><rect x="1" y="1" width="10" height="10" rx="2" /><rect x="5" y="3" width="4" height="4" /><rect x="3" y="5" width="4" height="4" fill="#f4f4f4" /></svg>
            </ViewBtn>
            <ViewBtn><CloseBox c="#777" /></ViewBtn>
          </div>
        </div>
        <div className="h-[498px] w-[539px] border-2 border-[#0000ff]">
          <div className="flex h-full w-full items-end border border-white bg-[#52576e] pb-[49px] pl-[52px]">
            <svg width="60" height="60" viewBox="0 0 60 60" fill="none">
              <path d="M9.500 46V21" stroke="#d8d800" strokeWidth="1.300" />
              <path d="M9.500 12l2.500 8.500h-5z" fill="#d8d800" />
              <rect x="18" y="47" width="22" height="1" fill="#f01010" />
              <path d="M44.500 47.500l-8-2.500v5z" fill="#e80000" />
              <circle cx="9.500" cy="47.500" r="3.200" fill="#006400" />
              <g fill="#d8d8e0" fontFamily="Liberation Sans, sans-serif" fontSize="10">
                <text x="10.500" y="20.500">Y</text>
                <text x="12" y="47.500">Z</text>
                <text x="38" y="47.500">X</text>
              </g>
            </svg>
          </div>
        </div>
      </div>
    </div>
  );
}

function RightPanel() {
  return (
    <div className="flex flex-1 flex-col">
      <div className="flex h-[22px] items-center justify-between pr-[1px] pl-[10px]">
        <span>Output Messages</span>
        <DockButtons />
      </div>
      <div className="mt-[7px] ml-[15px] h-[482px] w-[372px] border border-[#b4b4b4] bg-white pt-[5px] pl-[4px] font-['Liberation_Mono',monospace] text-[16px] leading-[19px] tracking-normal whitespace-pre text-[#239427]">
        {"hello, Bilbo Baggins\n6 + 9 = 15\nYou have chosen the color black\nboolean variable is selected"}
      </div>
      <div className="mt-[6px] ml-[15px] flex w-[372px] items-center justify-between">
        <Check label="Show full messages" className="tracking-normal" />
        <div className={BTN + "flex h-[25px] w-[80px] items-center justify-center"}>Clear</div>
      </div>
    </div>
  );
}

export default function App() {
  return (
    <div className="flex h-[741px] w-[1299px] flex-col overflow-hidden bg-[#efefef] font-['Noto_Sans','Open_Sans',sans-serif] text-[14.4px] leading-[18px] tracking-[0.06px] whitespace-nowrap text-black">
      <div className="relative flex h-[28px] shrink-0 items-center justify-center bg-linear-to-b from-[#3a3935] to-[#4c4a44] font-bold tracking-normal text-[#dfdbd2]">
        <span>ParaView 5.5.2-626-g13f66ffff1 64-bit</span>
        <div className="absolute top-[6px] right-[5px] flex gap-[4px]">
          <svg width="16" height="16" viewBox="0 0 16 16" fill="none"><circle cx="8" cy="8" r="7.500" fill="#7d7b72" stroke="#2e2d29" /><path d="M5 8h6" stroke="#33322e" strokeWidth="1.300" /></svg>
          <svg width="16" height="16" viewBox="0 0 16 16" fill="none"><circle cx="8" cy="8" r="7.500" fill="#7d7b72" stroke="#2e2d29" /><rect x="5" y="5.500" width="6" height="5" stroke="#33322e" strokeWidth="1.200" /></svg>
          <svg width="16" height="16" viewBox="0 0 16 16" fill="none"><circle cx="8" cy="8" r="7.500" fill="#ee5b32" stroke="#2e2d29" /><path d="M5.500 5.500l5 5M10.500 5.500l-5 5" stroke="#3a2018" strokeWidth="1.300" /></svg>
        </div>
      </div>
      <div className="flex h-[22px] shrink-0 items-center border-b border-[#d4d4d4] pl-[10px]">
        {MENUS.map(([a, b, c, w]) => (
          <span key={a + b + c} className={w}>{a}<span className={U}>{b}</span>{c}</span>
        ))}
      </div>
      <Toolbar>
        <Grip first />
        <Slot><Folder /></Slot>
        <Slot><Folder save /></Slot>
        <Sep />
        <Slot><Server /></Slot>
        <Slot><Server bad /></Slot>
        <Slot><Timer /></Slot>
        <Sep />
        <Slot><Undo /></Slot>
        <Slot><Undo gray flip /></Slot>
        <Sep />
        <Slot><Cube3 /></Slot>
        <Slot><LegendIcon /></Slot>
        <Slot><Palette /></Slot>
        <Grip />
        {["first", "prev", "play", "next", "last", "loop"].map((k) => <Slot key={k}><VcrIcon kind={k} /></Slot>)}
        <Grip />
        <span className="w-[40px]">Time:</span>
        <div className={FIELD + "h-[25px] w-[142px]"}>0</div>
        <div className="ml-[2px] flex h-[25px] w-[40px] items-center rounded-[3px] border border-[#c4c4c4] bg-[#f2f2f2] text-[#c0c0c0]">
          <span className="w-[25px] pl-[4px]">0</span>
          <div className="flex h-full flex-1 flex-col items-center justify-center gap-[5px] border-l border-[#c4c4c4]"><Caret dim up /><Caret dim /></div>
        </div>
      </Toolbar>
      <Toolbar>
        <Grip first />
        <Combo className="w-[150px]"><span className="-ml-px">Surface</span></Combo>
        <Grip />
        <Slot><ResetCam kind="out" /></Slot>
        <Slot><ResetCam kind="in" /></Slot>
        <Slot><ZoomBox /></Slot>
        <Slot><AxisIcon label="+X" left box={R} up={G} hor={Y} /></Slot>
        <Slot><AxisIcon label="-X" box={R} up={G} hor={Y} /></Slot>
        <Slot><AxisIcon label="+Y" box={Y} up={G} hor={R} /></Slot>
        <Slot><AxisIcon label="-Y" left box={Y} up={G} hor={R} /></Slot>
        <Slot><AxisIcon label="+Z" left box={G} up={Y} hor={R} /></Slot>
        <Slot><AxisIcon label="-Z" box={G} up={Y} hor={R} /></Slot>
        <Slot><Rot90 /></Slot>
        <Slot><Rot90 ccw /></Slot>
        <Grip />
        <div className="flex h-[31px] w-8 items-center justify-center rounded-[3px] border border-[#b0b0b0] bg-[#dadada]"><AxesEye /></div>
        <Slot><CenterRot /></Slot>
        <Slot><CenterRot kind="cross" /></Slot>
        <Slot><CenterRot kind="pick" /></Slot>
      </Toolbar>
      <Toolbar className="h-[38px]">
        <Grip first />
        <Slot><GrayBar /></Slot>
        <Slot><ColorMap /></Slot>
        <Slot><Rescale kind="link" /></Slot>
        <Slot><Rescale /></Slot>
        <Slot><Rescale kind="c" /></Slot>
        <Slot><Rescale kind="t" gray /></Slot>
        <Slot><Rescale kind="eye" /></Slot>
        <Combo className="w-[150px]"><Ball /><span>Solid Color</span></Combo>
        <Combo className="ml-[4px] w-[86px]" dim />
        <Grip filter />
        <Slot wide><Calc /></Slot>
        <Slot wide><Contour /></Slot>
        <Slot wide><CubeIcon kind="clip" /></Slot>
        <Slot wide><CubeIcon kind="slice" /></Slot>
        <Slot wide><CubeIcon kind="thresh" /></Slot>
        <Slot wide><CubeIcon kind="subset" /></Slot>
        <Slot wide><Glyph /></Slot>
        <Slot wide><Stream /></Slot>
        <Slot wide><Warp /></Slot>
        <Slot wide><Group /></Slot>
        <Slot wide><Group extract /></Slot>
        <Grip filter />
        <Slot wide><Plot kind="box" /></Slot>
        <Slot wide><Plot kind="point" /></Slot>
        <Slot wide><Plot kind="line" /></Slot>
        <Slot wide><Plot kind="sel" /></Slot>
        <Slot wide><Plot kind="star" /></Slot>
        <Grip filter />
      </Toolbar>
      <div className="flex h-[552px] shrink-0">
        <LeftPanel />
        <CenterPanel />
        <RightPanel />
      </div>
      <div className="flex flex-1 items-center gap-[2px] pb-px pl-[650px]">
        <div className="flex h-[20px] w-[20px] items-center justify-center rounded-[3px] border border-[#c6c6c6] bg-[#f3f3f3]">
          <Svg s={11}><path d="M4 4l16 16M20 4L4 20" stroke="#acacac" strokeWidth="8" /></Svg>
        </div>
        <div className="h-[20px] w-[626px] border border-t-[#a5a5a5] border-r-white border-b-white border-l-[#a5a5a5]" />
      </div>
    </div>
  );
}
